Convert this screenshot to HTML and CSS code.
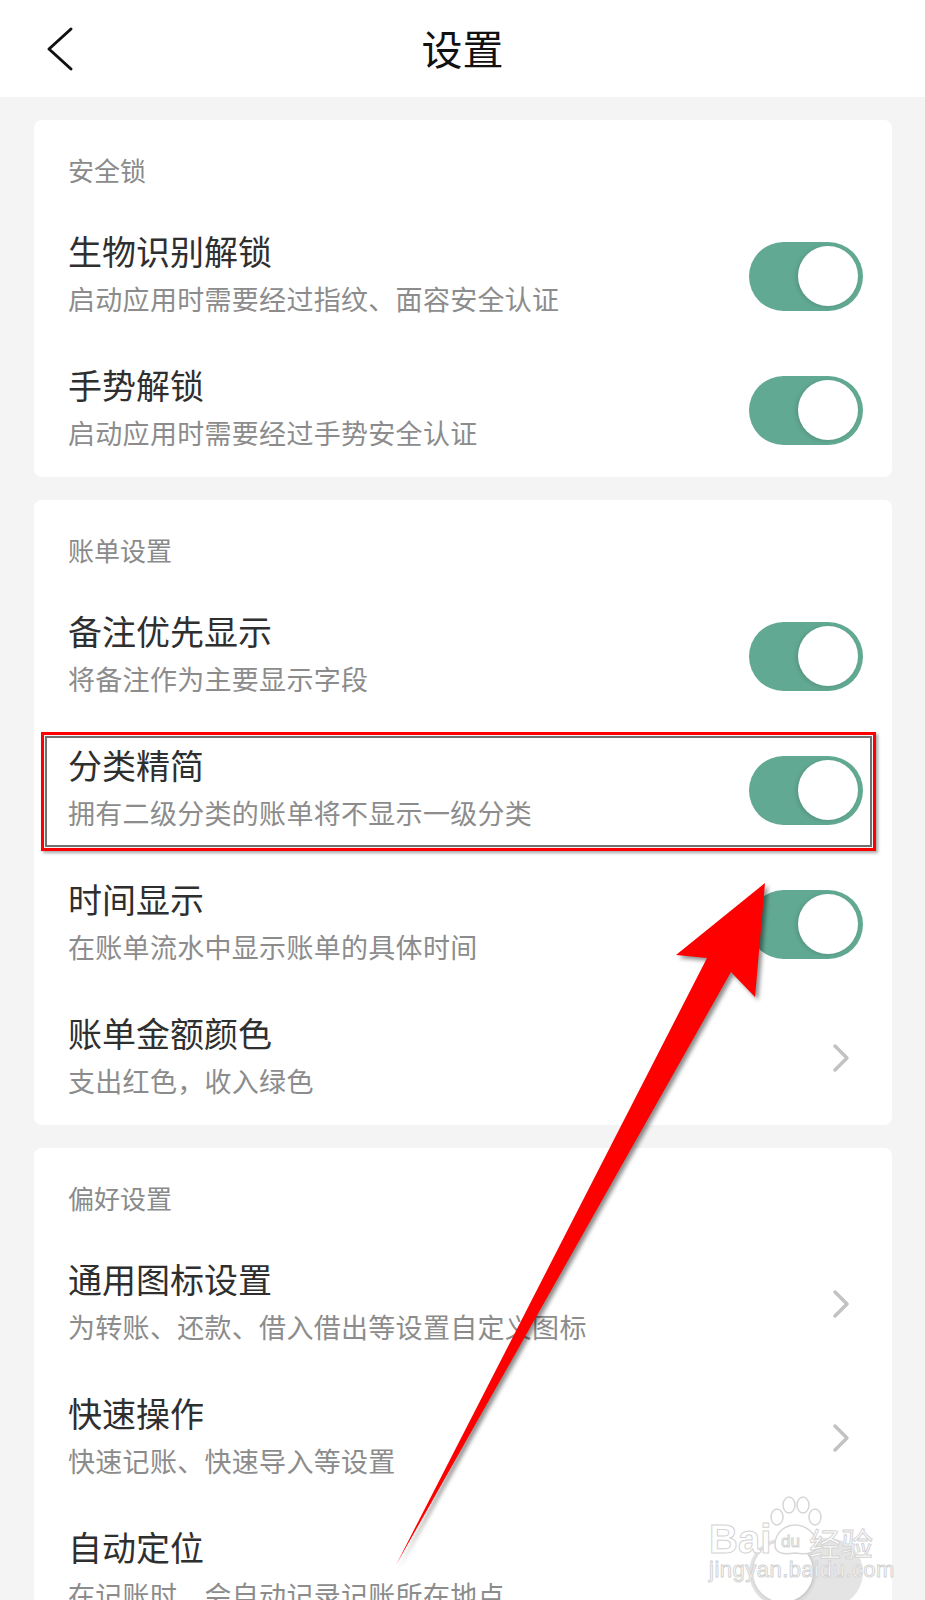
FILE: index.html
```html
<!DOCTYPE html>
<html lang="zh-CN">
<head>
    <meta charset="UTF-8">
    <meta name="viewport" content="width=device-width, initial-scale=1.0">
    <title>设置</title>
    <link rel="stylesheet" href="styles.css">
</head>
<body>
<div class="page">
    <div class="top-bar">
        <a class="back-btn">
            <svg width="30" height="48" viewBox="0 0 30 48"><path d="M26 4 L4 24 L26 44" fill="none" stroke="#111" stroke-width="3" stroke-linecap="round" stroke-linejoin="round"/></svg>
        </a>
        <div class="page-title">设置</div>
        <div class="spacer"></div>
    </div>

    <div class="card">
        <div class="card-head">安全锁</div>
        <div class="row">
            <div class="row-text">
                <div class="row-title">生物识别解锁</div>
                <div class="row-sub">启动应用时需要经过指纹、面容安全认证</div>
            </div>
            <div class="switch on"><span class="knob"></span></div>
        </div>
        <div class="row">
            <div class="row-text">
                <div class="row-title">手势解锁</div>
                <div class="row-sub">启动应用时需要经过手势安全认证</div>
            </div>
            <div class="switch on"><span class="knob"></span></div>
        </div>
    </div>

    <div class="card">
        <div class="card-head">账单设置</div>
        <div class="row">
            <div class="row-text">
                <div class="row-title">备注优先显示</div>
                <div class="row-sub">将备注作为主要显示字段</div>
            </div>
            <div class="switch on"><span class="knob"></span></div>
        </div>
        <div class="row">
            <div class="row-text">
                <div class="row-title">分类精简</div>
                <div class="row-sub">拥有二级分类的账单将不显示一级分类</div>
            </div>
            <div class="switch on"><span class="knob"></span></div>
        </div>
        <div class="row">
            <div class="row-text">
                <div class="row-title">时间显示</div>
                <div class="row-sub">在账单流水中显示账单的具体时间</div>
            </div>
            <div class="switch on"><span class="knob"></span></div>
        </div>
        <div class="row">
            <div class="row-text">
                <div class="row-title">账单金额颜色</div>
                <div class="row-sub">支出红色，收入绿色</div>
            </div>
            <svg class="chevron" width="20" height="30" viewBox="0 0 20 30"><path d="M4 3 L16 15 L4 27" fill="none" stroke="#c2c2c2" stroke-width="3.5" stroke-linecap="round" stroke-linejoin="round"/></svg>
        </div>
    </div>

    <div class="card">
        <div class="card-head">偏好设置</div>
        <div class="row">
            <div class="row-text">
                <div class="row-title">通用图标设置</div>
                <div class="row-sub">为转账、还款、借入借出等设置自定义图标</div>
            </div>
            <svg class="chevron" width="20" height="30" viewBox="0 0 20 30"><path d="M4 3 L16 15 L4 27" fill="none" stroke="#c2c2c2" stroke-width="3.5" stroke-linecap="round" stroke-linejoin="round"/></svg>
        </div>
        <div class="row">
            <div class="row-text">
                <div class="row-title">快速操作</div>
                <div class="row-sub">快速记账、快速导入等设置</div>
            </div>
            <svg class="chevron" width="20" height="30" viewBox="0 0 20 30"><path d="M4 3 L16 15 L4 27" fill="none" stroke="#c2c2c2" stroke-width="3.5" stroke-linecap="round" stroke-linejoin="round"/></svg>
        </div>
        <div class="row">
            <div class="row-text">
                <div class="row-title">自动定位</div>
                <div class="row-sub">在记账时，会自动记录记账所在地点</div>
            </div>
            <div class="switch"><span class="knob"></span></div>
        </div>
    </div>

    <!-- annotations drawn over the screenshot -->
    <div class="mark-box"></div>
    <svg class="mark-arrow" width="925" height="1600" viewBox="0 0 925 1600">
        <polygon points="765,883 676,955 707,958 396,1565 731,972 755,997" fill="#ff0000"/>
    </svg>

    <div class="watermark">
        <svg class="paw" width="60" height="62" viewBox="0 0 60 62">
            <g fill="#fff" stroke="#d6d6d6" stroke-width="1.5">
                <ellipse cx="12" cy="22" rx="6" ry="8"/>
                <ellipse cx="24" cy="10" rx="6" ry="8"/>
                <ellipse cx="38" cy="10" rx="6" ry="8"/>
                <ellipse cx="50" cy="22" rx="6" ry="8"/>
                <path d="M10 50 C10 36 22 30 30 30 C40 30 52 38 52 50 C52 58 42 60 30 58 C18 60 10 58 10 50 Z"/>
            </g>
        </svg>
        <span class="wm-bai">Bai</span>
        <span class="wm-du">du</span>
        <span class="wm-jy">经验</span>
        <span class="wm-url">jingyan.baidu.com</span>
    </div>
</div>
</body>
</html>
```

FILE: styles.css
```css
body {
    margin: 0;
    background: #f4f4f4;
    font-family: "Noto Sans CJK SC", "Noto Sans", sans-serif;
    overflow: hidden;
}
.page {
    position: relative;
    height: 1600px;
    overflow: hidden;
}
.top-bar {
    height: 97px;
    background: #fff;
    display: flex;
    align-items: center;
    margin-bottom: 23px;
}
.back-btn {
    width: 110px;
    padding-left: 45px;
    box-sizing: border-box;
    display: flex;
    align-items: center;
}
.spacer {
    width: 110px;
}
.page-title {
    flex: 1;
    text-align: center;
    font-size: 41px;
    color: #111;
    line-height: 50px;
    margin-top: -4px;
}
.card {
    background: #fff;
    margin: 0 33px 23px 34px;
    border-radius: 8px;
}
.card-head {
    height: 89px;
    box-sizing: border-box;
    padding: 34px 0 0 34px;
    font-size: 26px;
    line-height: 32px;
    color: #8a8a8a;
}
.row {
    height: 134px;
    display: flex;
    align-items: center;
    padding: 0 29px 0 34px;
}
.row-text {
    flex: 1;
    padding-bottom: 6px;
}
.row-title {
    font-size: 34px;
    line-height: 40px;
    color: #2f2f2f;
}
.row-sub {
    margin-top: 11px;
    font-size: 27px;
    line-height: 34px;
    letter-spacing: 0.3px;
    color: #8c8c8c;
}
.switch {
    width: 114px;
    height: 69px;
    border-radius: 35px;
    background: #e4e4e4;
    display: flex;
    align-items: center;
    justify-content: flex-start;
    padding: 0 4px;
    box-sizing: border-box;
}
.switch.on {
    background: #62a993;
    justify-content: flex-end;
    padding: 0 5px;
}
.knob {
    width: 60px;
    height: 60px;
    border-radius: 50%;
    background: #fff;
    box-shadow: -2px 1px 4px rgba(0, 0, 0, 0.12);
}
.switch:not(.on) .knob {
    box-shadow: 1px 1px 4px rgba(0, 0, 0, 0.18);
}
.chevron {
    margin-right: 12px;
}
.mark-box {
    position: absolute;
    left: 41px;
    top: 732px;
    width: 835px;
    height: 119px;
    box-sizing: border-box;
    border: 3px solid #ff0000;
    box-shadow: inset 0 0 0 1px #f4f4f4, inset 0 0 0 3px #707070, 2px 2px 3px rgba(0, 0, 0, 0.35);
}
.mark-arrow {
    position: absolute;
    left: 0;
    top: 0;
    pointer-events: none;
    filter: drop-shadow(3px 3px 2px rgba(0, 0, 0, 0.45));
}
.watermark {
    position: absolute;
    left: 705px;
    top: 1495px;
    width: 175px;
    height: 90px;
    font-family: "Liberation Sans", "Noto Sans CJK SC", sans-serif;
    color: #fff;
    -webkit-text-stroke: 1px #d4d4d4;
}
.paw {
    position: absolute;
    left: 60px;
    top: 0;
}
.wm-bai {
    position: absolute;
    left: 4px;
    top: 22px;
    font-size: 40px;
    font-weight: bold;
}
.wm-du {
    position: absolute;
    left: 76px;
    top: 37px;
    font-size: 17px;
}
.wm-jy {
    position: absolute;
    left: 104px;
    top: 24px;
    font-size: 32px;
}
.wm-url {
    position: absolute;
    left: 4px;
    top: 62px;
    font-size: 22px;
    letter-spacing: 0.5px;
}
```
